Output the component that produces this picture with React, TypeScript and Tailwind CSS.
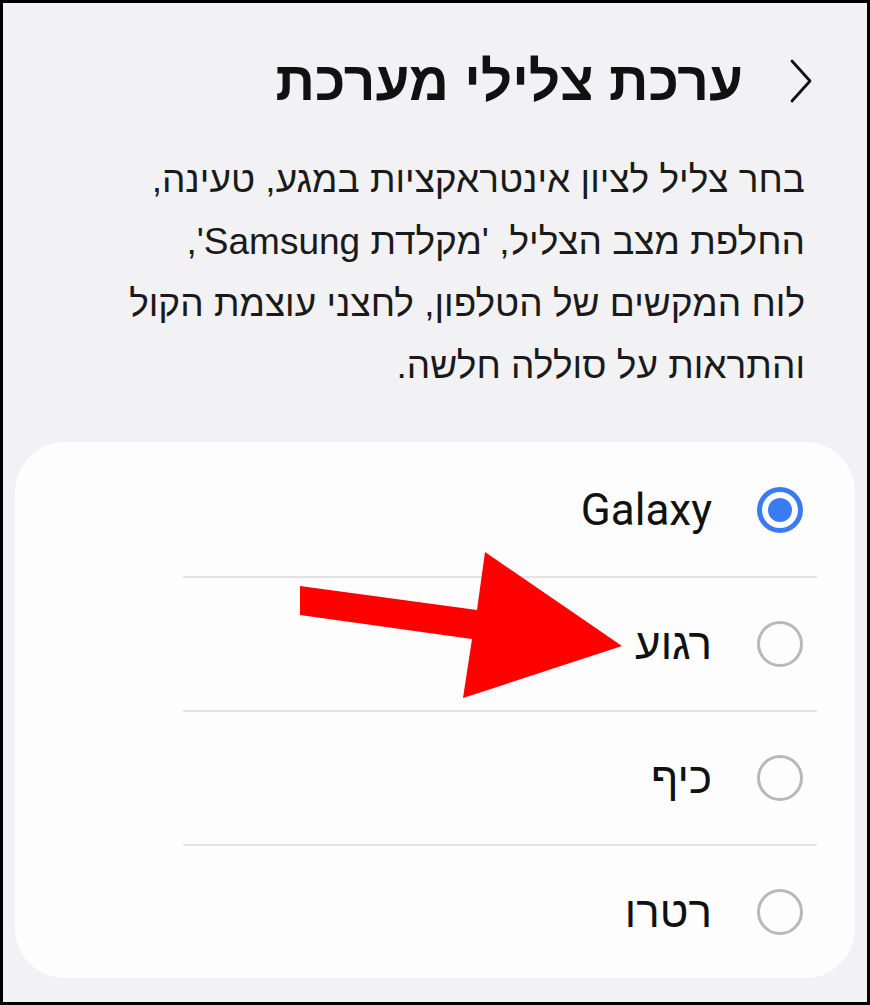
import React from "react";

const options = [
    { id: "galaxy", label: "Galaxy", selected: true },
    { id: "ragua", label: "רגוע", selected: false },
    { id: "kef", label: "כיף", selected: false },
    { id: "retro", label: "רטרו", selected: false },
];

function Radio({ selected }: { selected: boolean }) {
    if (selected) {
        return (
            <span className="flex h-[46px] w-[46px] shrink-0 items-center justify-center rounded-full border-[5px] border-[#3b7bf2]">
                <span className="h-[24px] w-[24px] rounded-full bg-[#3b7bf2]" />
            </span>
        );
    }
    return (
        <span className="h-[46px] w-[46px] shrink-0 rounded-full border-[3px] border-[#b8b8ba]" />
    );
}

export default function App() {
    return (
        <div className="h-[1005px] w-[870px] bg-black p-[3px]">
            <div
                dir="rtl"
                className="relative flex h-full flex-col bg-[#f2f2f4] text-[#111]"
                style={{ fontFamily: "'Liberation Sans', 'DejaVu Sans', sans-serif" }}
            >
                {/* כותרת */}
                <div className="flex items-center gap-[46px] pr-[54px] pt-[50px]">
                    <svg width="24" height="44" viewBox="0 0 24 44" fill="none" className="shrink-0">
                        <path d="M3 2 L21 22 L3 42" stroke="#111" strokeWidth="2.8" strokeLinejoin="round" strokeLinecap="round" />
                    </svg>
                    <h1 className="text-[55px] font-bold leading-[56px]">ערכת צלילי מערכת</h1>
                </div>

                {/* תיאור */}
                <p className="mt-[40px] pr-[62px] text-[37px] leading-[62px] text-[#1a1a1a]">
                    בחר צליל לציון אינטראקציות במגע, טעינה,
                    <br />
                    החלפת מצב הצליל, 'מקלדת Samsung',
                    <br />
                    לוח המקשים של הטלפון, לחצני עוצמת הקול
                    <br />
                    והתראות על סוללה חלשה.
                </p>

                {/* רשימת צלילים */}
                <div className="mx-[12px] mt-[45px] rounded-[50px] bg-[#fdfdfd] pt-[2px]">
                    {options.map((o, i) => (
                        <div key={o.id}>
                            {i > 0 && <div className="ml-[168px] mr-[38px] h-[2px] bg-[#e4e4e6]" />}
                            <div className="flex h-[132px] items-center gap-[45px] pr-[52px]">
                                <Radio selected={o.selected} />
                                <span
                                    className="text-[44px] text-[#111]"
                                    style={{ fontFamily: "Roboto, 'Liberation Sans', sans-serif" }}
                                >
                                    {o.label}
                                </span>
                            </div>
                        </div>
                    ))}
                </div>

                {/* חץ אדום */}
                <svg
                    className="pointer-events-none absolute left-0 top-0"
                    width="864"
                    height="999"
                    viewBox="3 3 864 999"
                >
                    <polygon
                        points="300,586 477,610 485,552 622,646 463,698 472,639 300,615"
                        fill="#ff0000"
                    />
                </svg>
            </div>
        </div>
    );
}
